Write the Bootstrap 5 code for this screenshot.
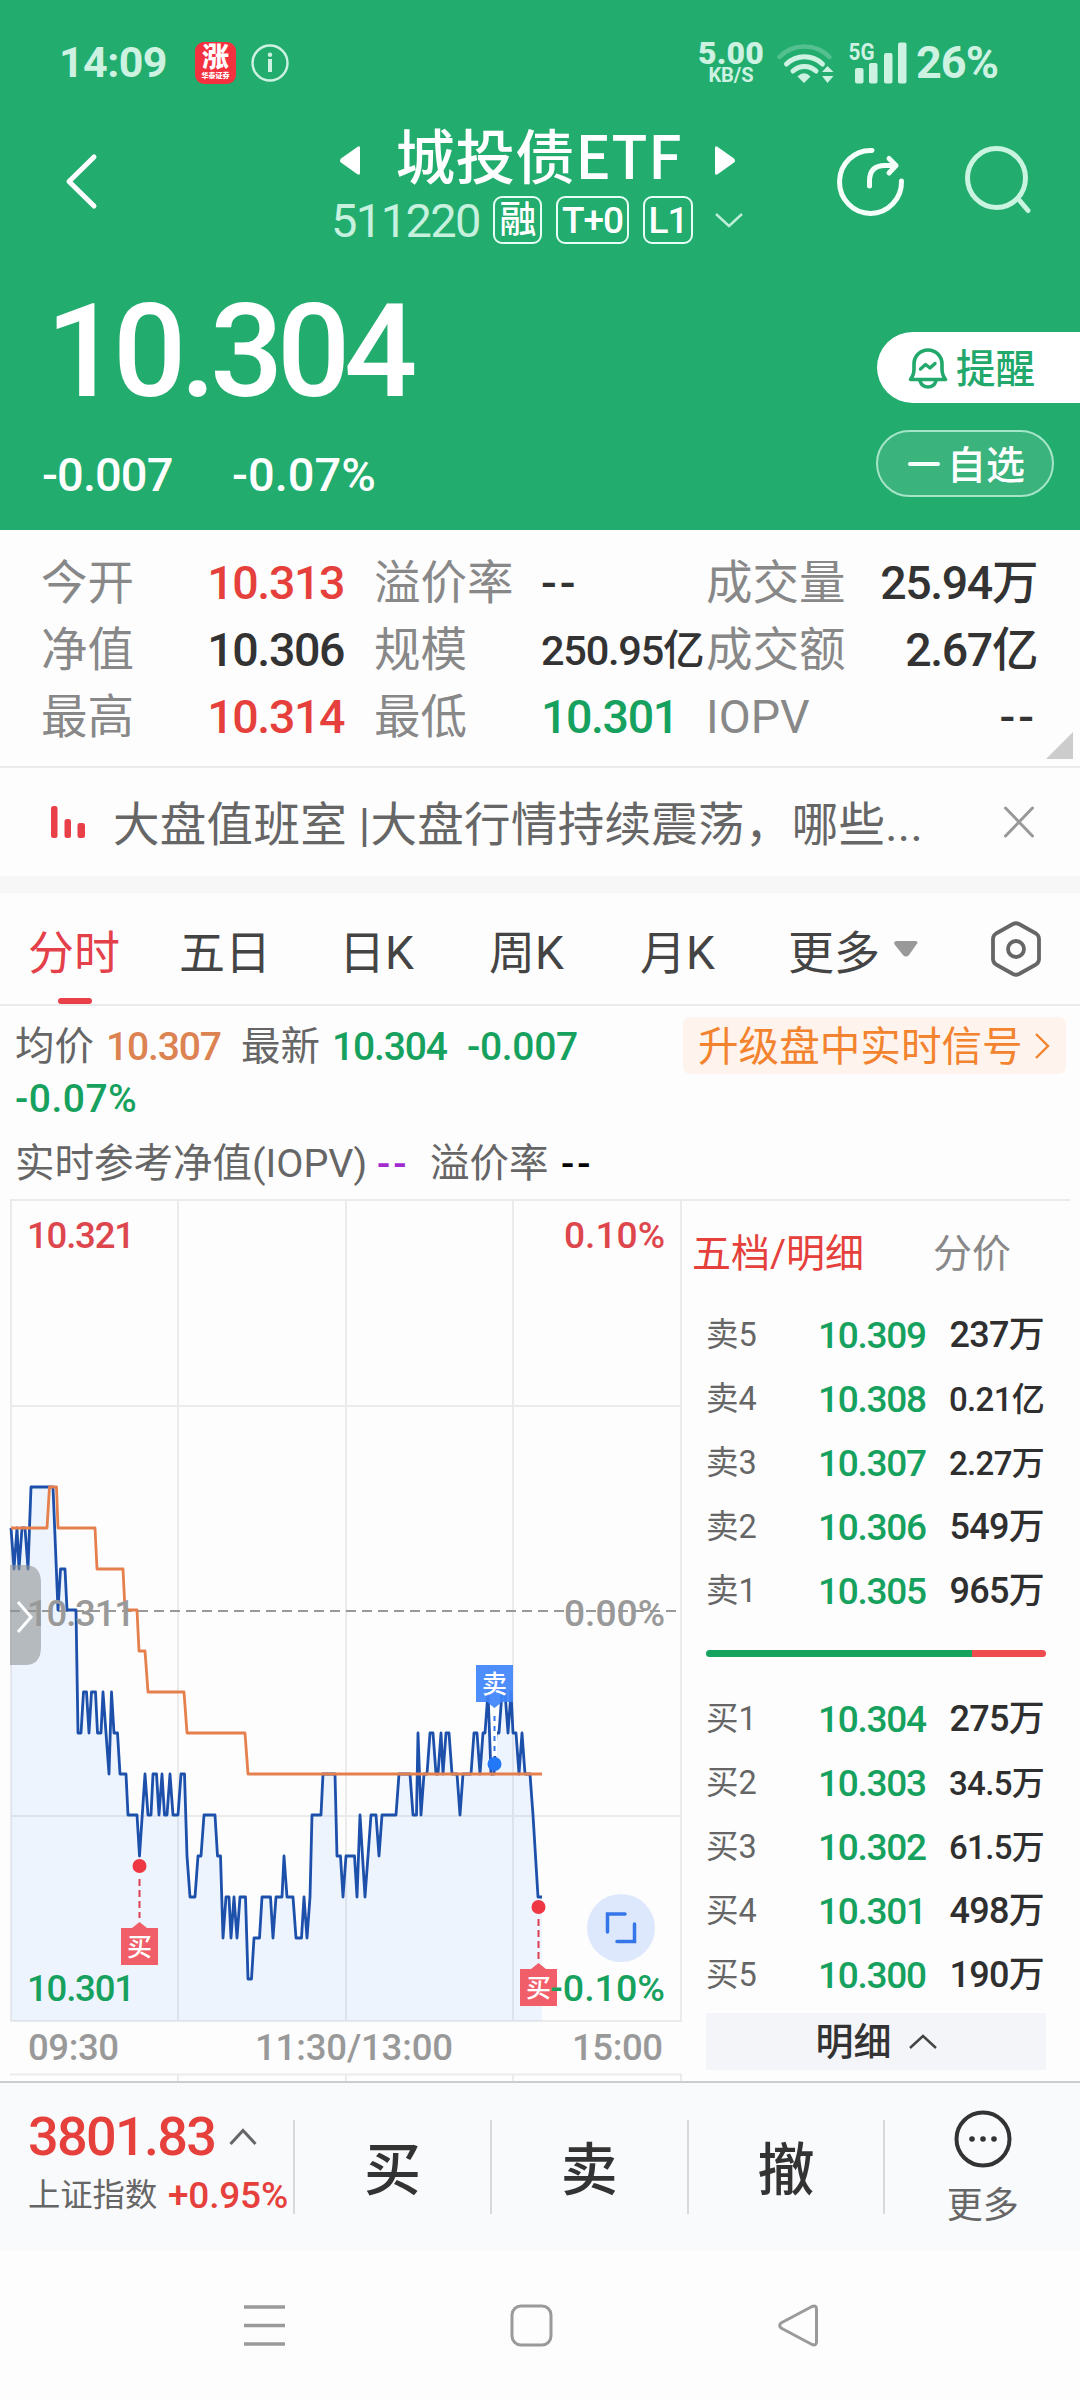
<!DOCTYPE html>
<html lang="zh-CN">
<head>
<meta charset="utf-8">
<meta name="viewport" content="width=device-width, initial-scale=1">
<title>城投债ETF 511220</title>
<link rel="stylesheet" href="https://cdn.jsdelivr.net/npm/bootstrap@5.3.0/dist/css/bootstrap.min.css">
<style>
  body { width: 1080px; height: 2400px; margin: 0; background: #fdfdfd; font-family: Roboto, "Noto Sans CJK SC", sans-serif; color: #333; line-height: 1; overflow-x: hidden; }
  svg { display: block; flex: none; }
  span, div { white-space: nowrap; }
  .up { color: #e5403b !important; }
  .down { color: #16a15e !important; }
  .dig { font-weight: 500; letter-spacing: -.03em; }
  .dash { letter-spacing: 3px !important; }

  .quote-head { height: 530px; background: #22ac6e; color: #fff; }
  .status { height: 125px; padding: 0 77px 0 59px; color: #cdf2e1; }
  .clock { font-size: 43px; font-weight: 700; width: 136px; letter-spacing: -.6px; }
  .app-ico { width: 41px; height: 42px; border-radius: 9px; background: #f4313f; color: #fff; margin-right: 15px; font-weight: 900; }
  .app-ico b { font-size: 27px; line-height: 27px; font-weight: 900; }
  .app-ico i { font-size: 7px; line-height: 8px; font-style: normal; }
  .speed { width: 66px; font-weight: 700; padding-bottom: 2px; }
  .speed b { font-size: 32px; line-height: 27px; letter-spacing: .2px; }
  .speed small { font-size: 20px; line-height: 17px; font-weight: 700; }
  .batt { font-size: 45px; font-weight: 700; letter-spacing: -1px; width: 87px; }

  .titlebar { height: 137px; padding: 0 49px 0 65px; }
  .title-main { height: 56px; font: 500 59.5px/56px "Noto Sans CJK SC", sans-serif; }
  .title-main span { width: 283px; margin: 0 35px; letter-spacing: .4px; }
  .title-main svg { margin-top: 14px; }
  .title-sub { height: 50px; gap: 14px; margin-top: 14px; }
  .code { font-size: 47px; color: #c6f1de; letter-spacing: -1.6px; width: 148px; }
  .tagbox { height: 48px; border: 2px solid #e6fff4; border-radius: 9px; font-size: 37px; line-height: 46px; text-align: center; font-weight: 500; letter-spacing: -1px; }

  .price { font-size: 129px; line-height: 130px; font-weight: 500; letter-spacing: -6.2px; }
  .chg { font-size: 47px; line-height: 50px; }
  .remind { width: 203px; height: 71px; background: #fff; color: #22a86b; border-radius: 36px 0 0 36px; font-size: 39.5px; padding-left: 31px; font-weight: 500; }
  .fav { width: 178px; height: 67px; border: 2px solid #a5e5c8; background: #3ab37d; border-radius: 34px; font-size: 39px; padding-left: 30px; font-weight: 500; margin: 27px 0 0 -1px; }
  .remind span, .fav span { padding-top: 5px; }

  .stats { height: 238px; padding: 20px 43px 0 41px; border-bottom: 2px solid #ebebeb; font-size: 46.5px; position: relative; }
  .stat-line { height: 67px; }
  .stat-line > :nth-child(1) { width: 120px; }
  .stat-line > :nth-child(2) { width: 183px; text-align: right; }
  .stat-line > :nth-child(3) { padding-left: 30px; box-sizing: content-box; width: 167px; }
  .stat-line > :nth-child(4) { width: 165px; }
  .stat-line > :nth-child(5) { width: 160px; }
  .stat-line > :nth-child(6) { width: 171px; text-align: right; }
  .lbl { color: #888; }
  .corner { position: absolute; right: 7px; bottom: 7px; }

  .news { height: 108px; padding: 0 46px 0 51px; font-size: 46.5px; color: #666; }
  .news span { padding-top: 6px; letter-spacing: .3px; }
  .gap-band { height: 17px; background: #f7f7f7; }
  .tabs-line { height: 113px; border-bottom: 2px solid #ebebeb; font-size: 46px; color: #444; padding: 0 39px 0 28px; position: relative; }
  .tabs-line span { padding-top: 8px; }
  .tabs-line .on { color: #e4404a; }
  .on-bar { position: absolute; left: 58px; bottom: 0; width: 34px; height: 6px; border-radius: 3px; background: #e93f49; }

  .avg { height: 193px; padding: 11px 14px 0 15px; color: #666; font-size: 39.5px; }
  .avg .dig { font-size: 39px; }
  .signal { width: 383px; height: 57px; border-radius: 7px; background: #fef4ed; color: #f3832e; font-size: 40.6px; padding: 0 16px 0 15px; }
  .signal span { padding-top: 3px; }

  .market { height: 882px; }
  #chart { font-weight: 500; }
  .book { width: 388px; border-top: 2px solid #ebebeb; padding: 0 24px 0 24px; }
  .book-tabs { height: 102px; margin-left: -14px; font-size: 39px; padding-top: 5px; }
  .lvl { height: 64px; font-size: 32.5px; color: #666; }
  .lvl > :nth-child(1) { width: 112px; }
  .lvl .dig { font-size: 37px; width: 113px; letter-spacing: -1.3px; }
  .lvl .vol { width: 114px; text-align: right; color: #2f2f2f; font-size: 36px; padding-right: 1px; font-weight: 500; letter-spacing: -.7px; }
  .lvl .vol.sm { font-size: 33px; }
  .depth { height: 7px; border-radius: 4px; overflow: hidden; margin: 27px 0 30px; }
  .detail { height: 57px; background: #f3f5f9; color: #333; font-size: 38px; font-weight: 500; margin-top: 6px; }

  .tradebar { height: 170px; background: #f9fafc; border-top: 2px solid #ccc; }
  .idx { width: 294px; padding: 0 0 8px 28px; }
  .idx-val { font-size: 54px; height: 64px; letter-spacing: -1.7px; }
  .idx-sub { font-size: 32.3px; color: #666; height: 52px; }
  .act { width: 197.3px; height: 94px; border-left: 2px solid #d9d9dc; font-size: 57px; font-weight: 500; }
  .act > b { font-weight: 500; padding-top: 6px; }
  .sysnav { height: 149px; padding: 53px 261px 0 244px; }
  .ct { font-size: 36px; font-weight: 400; }
</style>
<script src="https://cdn.jsdelivr.net/npm/bootstrap@5.3.0/dist/js/bootstrap.bundle.min.js"></script>
</head>
<body>

<header class="quote-head">
  <div class="status d-flex align-items-center">
    <span class="clock">14:09</span>
    <div class="app-ico d-flex flex-column align-items-center justify-content-center"><b>涨</b><i>华泰证券</i></div>
    <svg width="38" height="38" viewBox="0 0 38 38" fill="none" stroke="#cdf2e1"><circle cx="19" cy="19" r="17.5" stroke-width="2.4"/><path d="M19 15V28" stroke-width="4"/><circle cx="19" cy="10.7" r="2.2" fill="#cdf2e1" stroke="none"/></svg>
    <div class="speed d-flex flex-column align-items-center ms-auto"><b>5.00</b><small>KB/S</small></div>
    <svg class="ms-2" width="144" height="50" viewBox="772 37 144 50" fill="none" stroke="#cdf2e1" stroke-linecap="round">
      <path d="M779.500 56A35 35 0 0 1 829.500 56" stroke-width="4.500" stroke="#55c08f"/>
      <path d="M786.500 63A26 26 0 0 1 822.500 63" stroke-width="5"/>
      <path d="M793 70A17 17 0 0 1 816 70" stroke-width="5"/>
      <path d="M797.500 75.500Q804 69 810.500 75.500L804 82Z" fill="#cdf2e1" stroke="none"/>
      <path d="M822 71L827.500 65L833.500 71ZM822 75L827.500 82L833.500 75Z" fill="#cdf2e1" stroke="none"/>
      <g fill="#cdf2e1" stroke="none"><rect x="855" y="67" width="8.500" height="15.500" rx="2"/><rect x="869" y="62" width="8.500" height="20.500" rx="2"/><rect x="884" y="52" width="8.500" height="30.500" rx="2"/><rect x="898" y="41.500" width="8.500" height="41" rx="2"/>
      <text x="848.500" y="58.500" font-size="24" font-weight="700" textLength="26" lengthAdjust="spacingAndGlyphs">5G</text></g>
    </svg>
    <span class="batt">26%</span>
  </div>

  <div class="titlebar d-flex">
    <svg width="36" height="112" viewBox="65 125 36 112" fill="none" stroke="#fff" stroke-width="5" stroke-linecap="round" stroke-linejoin="round"><path d="M94 157L69 181.500L94 206"/></svg>
    <div class="ms-auto d-flex flex-column align-items-center">
      <div class="title-main d-flex align-items-center">
        <svg width="22" height="31" viewBox="0 0 22 31" fill="#fff"><path d="M19 1.500Q21 .5 21 3V28Q21 31 18 29L2 17.500Q0 16 2 13.500Z"/></svg>
        <span>城投债ETF</span>
        <svg width="22" height="31" viewBox="0 0 22 31" fill="#fff"><path d="M3 1.500Q1 .5 1 3V28Q1 31 4 29L20 17.500Q22 16 20 13.500Z"/></svg>
      </div>
      <div class="title-sub d-flex align-items-center">
        <span class="code">511220</span>
        <span class="tagbox" style="width:49px">融</span>
        <span class="tagbox" style="width:73px">T+0</span>
        <span class="tagbox" style="width:50px">L1</span>
        <svg class="ms-2" width="28" height="16" viewBox="0 0 28 16" fill="none" stroke="#bfeed9" stroke-width="2.400"><path d="M1 2L14 14L27 2"/></svg>
      </div>
    </div>
    <svg style="margin-left:91px" width="197" height="112" viewBox="833 125 197 112" fill="none" stroke="#f4fffa" stroke-width="5" stroke-linecap="round" stroke-linejoin="round">
      <path d="M871 150.500A31 31.500 0 1 0 900.500 181"/>
      <path d="M868.500 186V181Q868.500 165.500 884 165.500H895M888 158.500L895 165.500L888 173"/>
      <g stroke="#c9f4e0"><ellipse cx="995.500" cy="178" rx="29" ry="29.500"/><path d="M1019 201L1027 210.500"/></g>
    </svg>
  </div>

  <div class="d-flex justify-content-between">
    <div>
      <div class="price" style="padding:25px 0 0 46px">10.304</div>
      <div class="chg dig d-flex" style="padding:33px 0 0 42px"><span style="width:190px;letter-spacing:-.9px">-0.007</span><span style="letter-spacing:0">-0.07%</span></div>
    </div>
    <div class="d-flex flex-column" style="padding-top:70px">
      <div class="remind d-flex align-items-center">
        <svg class="me-2" width="40" height="42" viewBox="0 0 40 42" fill="none" stroke="#22a86b" stroke-width="3.600" stroke-linejoin="round" stroke-linecap="round"><path d="M2.500 32.500Q6 28 6 22V17A14 14 0 0 1 34 17V22Q34 28 37.500 32.500Z"/><path d="M12 34Q14 40 20 40Q26 40 28 34"/><path d="M12.500 22L17.500 17.500L22 21L27 16.500" stroke-width="3.400"/></svg>
        <span>提醒</span>
      </div>
      <div class="fav d-flex align-items-center">
        <svg width="39" height="6"><rect y="1" width="32" height="4" rx="2" fill="#f4fffa"/></svg><span>自选</span>
      </div>
    </div>
  </div>
</header>

<section class="stats">
  <div class="stat-line d-flex align-items-center"><span class="lbl">今开</span><span class="dig up">10.313</span><span class="lbl">溢价率</span><span class="dig dash">--</span><span class="lbl">成交量</span><span class="dig">25.94万</span></div>
  <div class="stat-line d-flex align-items-center"><span class="lbl">净值</span><span class="dig">10.306</span><span class="lbl">规模</span><span class="dig" style="font-size:41.5px">250.95亿</span><span class="lbl">成交额</span><span class="dig">2.67亿</span></div>
  <div class="stat-line d-flex align-items-center"><span class="lbl">最高</span><span class="dig up">10.314</span><span class="lbl">最低</span><span class="dig down">10.301</span><span class="lbl">IOPV</span><span class="dig dash">--</span></div>
  <svg class="corner" width="27" height="27"><path d="M27 0V27H0Z" fill="#ccc"/></svg>
</section>

<section class="news d-flex align-items-center">
  <svg width="62" height="34" viewBox="0 0 62 34" fill="#e93f49"><rect x="0" y="1" width="6.500" height="32" rx="2.500"/><rect x="13.500" y="14" width="6.500" height="19" rx="2.500"/><rect x="26.500" y="18" width="7.500" height="15" rx="2.500"/></svg>
  <span>大盘值班室 |大盘行情持续震荡，哪些...</span>
  <svg class="ms-auto" width="30" height="32" viewBox="0 0 30 32" stroke="#999" stroke-width="3" stroke-linecap="round"><path d="M1.500 2L28.500 30M28.500 2L1.500 30"/></svg>
</section>
<div class="gap-band"></div>

<nav class="tabs-line d-flex align-items-center">
  <span class="on" style="width:151px">分时</span>
  <span style="width:160px">五日</span>
  <span style="width:150px">日K</span>
  <span style="width:151px">周K</span>
  <span style="width:148px">月K</span>
  <span>更多</span>
  <svg style="margin-left:14px" width="24" height="16"><path d="M2 0H22Q25 1 22 4L15 14Q12 17 9 14L1 4Q-1 1 2 0Z" fill="#999"/></svg>
  <svg class="ms-auto" width="50" height="56" viewBox="0 0 50 56" fill="none" stroke="#666" stroke-width="3.800" stroke-linejoin="round"><path d="M22 3Q25 1.500 28 3L45 12.500Q48 14.500 48 18V38Q48 41.500 45 43.500L28 53Q25 54.500 22 53L5 43.500Q2 41.500 2 38V18Q2 14.500 5 12.500Z"/><circle cx="25" cy="28" r="8"/></svg>
  <i class="on-bar"></i>
</nav>

<section class="avg">
  <div class="d-flex justify-content-between" style="height:122px">
    <div>
      <div class="d-flex align-items-center" style="height:60px"><span style="width:91px">均价</span><span class="dig" style="width:135px;color:#dc8351">10.307</span><span style="width:91px">最新</span><span class="dig down" style="width:135px">10.304</span><span class="dig down" style="letter-spacing:-.3px">-0.007</span></div>
      <div class="dig down" style="line-height:45px;letter-spacing:.5px">-0.07%</div>
    </div>
    <div class="signal d-flex align-items-center justify-content-between"><span>升级盘中实时信号</span><svg width="15" height="28" viewBox="0 0 15 28" fill="none" stroke="#f3832e" stroke-width="2.400"><path d="M1 2L13 14L1 26"/></svg></div>
  </div>
  <div class="d-flex align-items-center" style="height:50px"><span style="width:362px">实时参考净值(IOPV)</span><span class="dig dash" style="width:53px;color:#a22bd0">--</span><span style="width:131px">溢价率</span><span class="dig dash text-black">--</span></div>
</section>

<main class="market d-flex">
  <svg id="chart" width="682" height="882" viewBox="0 1199 682 882" font-size="36.500">
    <g stroke="#ebebeb" stroke-width="2" fill="none">
      <path d="M10 1200H682M10 1406H682M10 1816H682M10 2021H682M10 2074.500H682M11 1200V2021M178 1200V2021M346 1200V2021M513 1200V2021M681 1200V2021M178 2074V2081M346 2074V2081M513 2074V2081M681 2074V2081"/>
    </g>
    <path id="area" fill="#5592ff" fill-opacity=".085"/>
    <path d="M10 1611H681" stroke="#999" stroke-width="2" stroke-dasharray="10 6"/>
    <path id="priceLine" fill="none" stroke="#1c50ab" stroke-width="2.800" stroke-linejoin="round"/>
    <path id="avgLine" fill="none" stroke="#e57f4c" stroke-width="2.800" stroke-linejoin="round"/>

    <g stroke="#dc3f50" stroke-width="2" stroke-dasharray="7 4"><path d="M139.500 1879V1918M538.500 1919V1960"/></g>
    <circle cx="139.500" cy="1866" r="7" fill="#ee3743"/><circle cx="538.500" cy="1907" r="7" fill="#ee3743"/>
    <g fill="#f0525f" fill-opacity=".93"><path d="M121 1928H132L139.500 1922L147 1928H158V1965H121Z"/><path d="M520 1969H531L538.500 1963L546 1969H557V2006H520Z"/></g>
    <path d="M494.500 1709V1756" stroke="#fff" stroke-width="5"/>
    <path d="M494.500 1716V1756" stroke="#3277ee" stroke-width="2" stroke-dasharray="5 5"/>
    <circle cx="494.500" cy="1764" r="7" fill="#2378f7"/>
    <path d="M476 1665H513V1702H502L494.500 1708L487 1702H476Z" fill="#3f84fa" fill-opacity=".92"/>
    <g fill="#fff" font-family="Noto Sans CJK SC" font-size="25" font-weight="500" text-anchor="middle"><text x="139.500" y="1956">买</text><text x="538.500" y="1997">买</text><text x="494.500" y="1693">卖</text></g>

    <path d="M10 1565H25Q41 1565 41 1583V1647Q41 1665 25 1665H10Z" fill="#8f9296" fill-opacity=".6"/>
    <path d="M18 1602L31 1617L18 1632" fill="none" stroke="#fff" stroke-width="3"/>
    <circle cx="621" cy="1928" r="34" fill="#dee8fc"/>
    <path d="M607.500 1932V1914H625M634.500 1924V1941.500H617" fill="none" stroke="#3476e8" stroke-width="3.500" stroke-linecap="round"/>

    <g fill="#dd464c"><text x="27" y="1248" textLength="108">10.321</text><text x="564" y="1248" textLength="101" lengthAdjust="spacingAndGlyphs">0.10%</text></g>
    <g fill="#999"><text x="27" y="1626" textLength="108">10.311</text><text x="564" y="1626" textLength="101" lengthAdjust="spacingAndGlyphs">0.00%</text>
      <text x="28" y="2060" textLength="91">09:30</text><text x="255" y="2060" textLength="198">11:30/13:00</text><text x="572" y="2060" textLength="91">15:00</text></g>
    <g fill="#16a15e"><text x="27" y="2001" textLength="108">10.301</text><text x="550" y="2001" textLength="115" lengthAdjust="spacingAndGlyphs">-0.10%</text></g>
  </svg>

  <aside class="book">
    <div class="book-tabs d-flex align-items-center"><span class="up" style="width:241px">五档/明细</span><span class="lbl">分价</span></div>
    <div class="lvl d-flex align-items-center"><span>卖5</span><span class="dig down">10.309</span><span class="vol">237万</span></div>
    <div class="lvl d-flex align-items-center"><span>卖4</span><span class="dig down">10.308</span><span class="vol sm">0.21亿</span></div>
    <div class="lvl d-flex align-items-center"><span>卖3</span><span class="dig down">10.307</span><span class="vol sm">2.27万</span></div>
    <div class="lvl d-flex align-items-center"><span>卖2</span><span class="dig down">10.306</span><span class="vol">549万</span></div>
    <div class="lvl d-flex align-items-center"><span>卖1</span><span class="dig down">10.305</span><span class="vol">965万</span></div>
    <div class="depth d-flex"><div style="width:78.2%;background:#15a35f"></div><div class="flex-fill" style="background:#ee4c4f"></div></div>
    <div class="lvl d-flex align-items-center"><span>买1</span><span class="dig down">10.304</span><span class="vol">275万</span></div>
    <div class="lvl d-flex align-items-center"><span>买2</span><span class="dig down">10.303</span><span class="vol sm">34.5万</span></div>
    <div class="lvl d-flex align-items-center"><span>买3</span><span class="dig down">10.302</span><span class="vol sm">61.5万</span></div>
    <div class="lvl d-flex align-items-center"><span>买4</span><span class="dig down">10.301</span><span class="vol">498万</span></div>
    <div class="lvl d-flex align-items-center"><span>买5</span><span class="dig down">10.300</span><span class="vol">190万</span></div>
    <div class="detail d-flex align-items-center justify-content-center"><span>明细</span><svg style="margin-left:17px" width="28" height="16" viewBox="0 0 28 16" fill="none" stroke="#444" stroke-width="2.400"><path d="M1 14L14 2L27 14"/></svg></div>
  </aside>
</main>

<footer>
  <div class="tradebar d-flex align-items-center">
    <div class="idx">
      <div class="idx-val dig up d-flex align-items-center"><span style="width:201px">3801.83</span><svg width="28" height="18" viewBox="0 0 28 18" fill="none" stroke="#666" stroke-width="3"><path d="M1.500 16L14 2.500L26.500 16"/></svg></div>
      <div class="idx-sub d-flex align-items-center"><span style="width:140px">上证指数</span><span class="dig up" style="font-size:37px;letter-spacing:-.2px">+0.95%</span></div>
    </div>
    <div class="act d-flex align-items-center justify-content-center"><b>买</b></div>
    <div class="act d-flex align-items-center justify-content-center"><b>卖</b></div>
    <div class="act d-flex align-items-center justify-content-center"><b>撤</b></div>
    <div class="act flex-fill d-flex flex-column align-items-center justify-content-center">
      <svg width="58" height="58" viewBox="0 0 58 58"><circle cx="29" cy="29" r="26.500" fill="none" stroke="#333" stroke-width="4"/><g fill="#333"><circle cx="18" cy="29" r="2.800"/><circle cx="29" cy="29" r="2.800"/><circle cx="40" cy="29" r="2.800"/></g></svg>
      <span class="ct" style="margin-top:20px;color:#666">更多</span>
    </div>
  </div>
  <div class="sysnav d-flex justify-content-between">
    <svg width="41" height="43" stroke="#9a9a9a" stroke-width="3.400"><path d="M0 3H41M0 21.500H41M0 40H41"/></svg>
    <svg width="43" height="43" fill="none" stroke="#9a9a9a" stroke-width="3"><rect x="2" y="2" width="39" height="39" rx="9"/></svg>
    <svg width="41" height="43" fill="none" stroke="#9a9a9a" stroke-width="3" stroke-linejoin="round"><path d="M3 19L34 2.500Q38.500 1 38.500 5V38Q38.500 42 34 40.500L3 24Q.5 21.500 3 19Z"/></svg>
  </div>
</footer>

<script>
  // Each sample is [x, price tick]; one tick is 0.001, tick 11 is yesterday's close.
  const y = t => 1610 + (11 - t) * 41;
  const price = [[11,13],[14,12],[17,13],[19,12],[22,13],[25,13],[28,12],[31,14],[53,14],[58,11],[60.5,12],[65,12],[67,11],[76,11],[78,8],[81,8],[83.5,9],[86.5,9],[89,8],[91.5,9],[95.5,9],[97.5,8],[101,8],[103,9],[106,8],[109,7],[111.5,9],[114,8],[117.5,8],[120,7],[126,7],[128,6],[137,6],[139.5,5],[145,7],[148,6],[151,6],[153,7],[156.5,7],[159,6],[162,7],[164.5,6],[167,6],[170,7],[173,6],[178,6],[181,7],[184.5,7],[187,5],[190,4],[195,4],[198,5],[201,5],[204,6],[215,6],[217.5,5],[220.5,5],[223,3],[226,4],[229,4],[231,3],[234,4],[237,3],[240,4],[245.5,4],[248,2],[251.5,2],[254,3],[259.5,3],[262,4],[270.5,4],[273,3],[276,4],[282,4],[284,5],[287,4],[293,4],[296,3],[301.5,3],[304,4],[307,3],[310,4],[312,6],[321,6],[323,7],[335,7],[337,5],[340.5,5],[343,4],[346,5],[354.5,5],[357,4],[360,6],[365,4],[371,6],[376,6],[379,5],[382,6],[396,6],[399,7],[410,7],[413,6],[416.5,6],[418,8],[421,6],[424,7],[427,7],[430,8],[433,8],[436,7],[438,7],[441,8],[443,7],[446,8],[449,8],[452,7],[457,7],[460,6],[463,7],[471,7],[474,8],[477,8],[480,7],[483,8],[485,8],[488,9],[491,7],[494,7],[496,8],[499,8],[502,9],[505,9],[508,8],[511,9],[513,8],[516,8],[519,7],[522,8],[525,7],[530,7],[533,6],[538,4],[542,4]];
  const avg = [[11,13],[47,13],[49.5,14],[56.5,14],[58,13],[95,13],[97,12],[123,12],[125,11],[137,11],[139,10],[145,10],[148,9],[184,9],[187,8],[245,8],[248,7],[542,7]];
  const path = a => 'M' + a.map(([x, t]) => x + ' ' + y(t)).join('L');
  document.getElementById('priceLine').setAttribute('d', path(price));
  document.getElementById('avgLine').setAttribute('d', path(avg));
  document.getElementById('area').setAttribute('d', path(price) + 'L542 2021L11 2021Z');
</script>
</body>
</html>
